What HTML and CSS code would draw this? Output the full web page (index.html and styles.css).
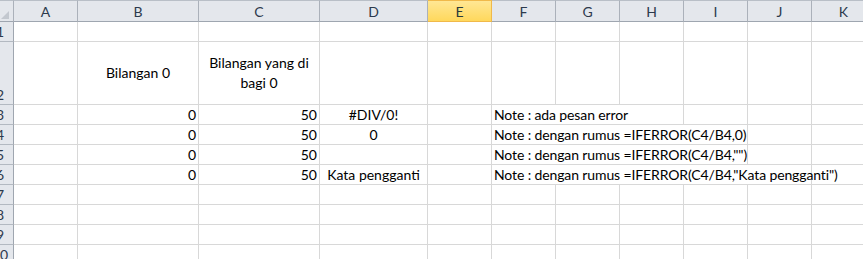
FILE: index.html
```html
<!DOCTYPE html>
<html lang="id">
<head>
    <meta charset="UTF-8">
    <title>IFERROR</title>
    <link rel="stylesheet" href="styles.css">
</head>
<body>
    <div class="sheet">
        <!-- column headers -->
        <div class="corner"></div>
        <div class="colhead">A</div>
        <div class="colhead">B</div>
        <div class="colhead">C</div>
        <div class="colhead">D</div>
        <div class="colhead active">E</div>
        <div class="colhead">F</div>
        <div class="colhead">G</div>
        <div class="colhead">H</div>
        <div class="colhead">I</div>
        <div class="colhead">J</div>
        <div class="colhead">K</div>

        <!-- row 1 -->
        <div class="rowhead">1</div>
        <div class="cell"></div><div class="cell"></div><div class="cell"></div><div class="cell"></div>
        <div class="cell"></div><div class="cell"></div><div class="cell"></div><div class="cell"></div>
        <div class="cell"></div><div class="cell"></div><div class="cell"></div>

        <!-- row 2 -->
        <div class="rowhead">2</div>
        <div class="cell"></div>
        <div class="cell wrap">Bilangan 0</div>
        <div class="cell wrap">Bilangan yang di bagi 0</div>
        <div class="cell"></div><div class="cell"></div><div class="cell"></div><div class="cell"></div>
        <div class="cell"></div><div class="cell"></div><div class="cell"></div><div class="cell"></div>

        <!-- row 3 -->
        <div class="rowhead">3</div>
        <div class="cell"></div>
        <div class="cell num">0</div>
        <div class="cell num">50</div>
        <div class="cell mid">#DIV/0!</div>
        <div class="cell"></div>
        <div class="cell note span3">Note : ada pesan error</div>
        <div class="cell"></div><div class="cell"></div><div class="cell"></div>

        <!-- row 4 -->
        <div class="rowhead">4</div>
        <div class="cell"></div>
        <div class="cell num">0</div>
        <div class="cell num">50</div>
        <div class="cell mid">0</div>
        <div class="cell"></div>
        <div class="cell note span4">Note : dengan rumus =IFERROR(C4/B4,0)</div>
        <div class="cell"></div><div class="cell"></div>

        <!-- row 5 -->
        <div class="rowhead">5</div>
        <div class="cell"></div>
        <div class="cell num">0</div>
        <div class="cell num">50</div>
        <div class="cell mid"></div>
        <div class="cell"></div>
        <div class="cell note span4">Note : dengan rumus =IFERROR(C4/B4,"")</div>
        <div class="cell"></div><div class="cell"></div>

        <!-- row 6 -->
        <div class="rowhead">6</div>
        <div class="cell"></div>
        <div class="cell num">0</div>
        <div class="cell num">50</div>
        <div class="cell mid">Kata pengganti</div>
        <div class="cell"></div>
        <div class="cell note span5">Note : dengan rumus =IFERROR(C4/B4,"Kata pengganti")</div>
        <div class="cell"></div>

        <!-- rows 7 - 10 -->
        <div class="rowhead">7</div>
        <div class="cell"></div><div class="cell"></div><div class="cell"></div><div class="cell"></div>
        <div class="cell"></div><div class="cell"></div><div class="cell"></div><div class="cell"></div>
        <div class="cell"></div><div class="cell"></div><div class="cell"></div>

        <div class="rowhead">8</div>
        <div class="cell"></div><div class="cell"></div><div class="cell"></div><div class="cell"></div>
        <div class="cell"></div><div class="cell"></div><div class="cell"></div><div class="cell"></div>
        <div class="cell"></div><div class="cell"></div><div class="cell"></div>

        <div class="rowhead">9</div>
        <div class="cell"></div><div class="cell"></div><div class="cell"></div><div class="cell"></div>
        <div class="cell"></div><div class="cell"></div><div class="cell"></div><div class="cell"></div>
        <div class="cell"></div><div class="cell"></div><div class="cell"></div>

        <div class="rowhead">10</div>
        <div class="cell"></div><div class="cell"></div><div class="cell"></div><div class="cell"></div>
        <div class="cell"></div><div class="cell"></div><div class="cell"></div><div class="cell"></div>
        <div class="cell"></div><div class="cell"></div><div class="cell"></div>
    </div>
</body>
</html>
```

FILE: styles.css
```css
body {
    margin: 0;
    background: white;
    overflow: hidden;
    font-family: Lato, "Open Sans", sans-serif;
    font-size: 14px;
}
.sheet {
    display: grid;
    grid-template-columns: 27px 64px 121px 121px 108px repeat(7, 64px);
    grid-template-rows: 22px 20px 63px repeat(8, 20px);
    margin-left: -13px;
    width: 890px;
}
.sheet > div {
    box-sizing: border-box;
    display: flex;
    align-items: flex-end;
    line-height: 19px;
    white-space: nowrap;
}
.corner,
.colhead {
    background: #e4e7ec;
    border-top: 1px solid #b9bfc7;
    border-right: 1px solid #abb1ba;
    border-bottom: 1px solid #9fa6b0;
    color: #2d3a4c;
}
.colhead {
    justify-content: center;
}
.colhead.active {
    background: linear-gradient(#ffe794, #ffd85c);
    border-color: #f0b94a;
    color: #2a3a3a;
}
.corner {
    justify-content: flex-end;
    padding: 0 4px 2px 0;
}
.corner::after {
    content: "";
    border-left: 8px solid transparent;
    border-bottom: 8px solid #c3c8cf;
}
.rowhead {
    background: #e4e7ec;
    border-right: 1px solid #9fa6b0;
    border-bottom: 1px solid #b3b9c1;
    color: #2d3a4c;
    justify-content: center;
}
.cell {
    border-right: 1px solid #d8d8d8;
    border-bottom: 1px solid #d8d8d8;
    padding: 0 2px;
    color: #000;
}
.num {
    justify-content: flex-end;
}
.mid {
    justify-content: center;
}
.note {
    letter-spacing: -0.12px;
}
.wrap {
    align-items: center !important;
    justify-content: center;
    text-align: center;
    white-space: normal !important;
    line-height: 20px !important;
}
.span3 { grid-column: span 3; }
.span4 { grid-column: span 4; }
.span5 { grid-column: span 5; }
```
